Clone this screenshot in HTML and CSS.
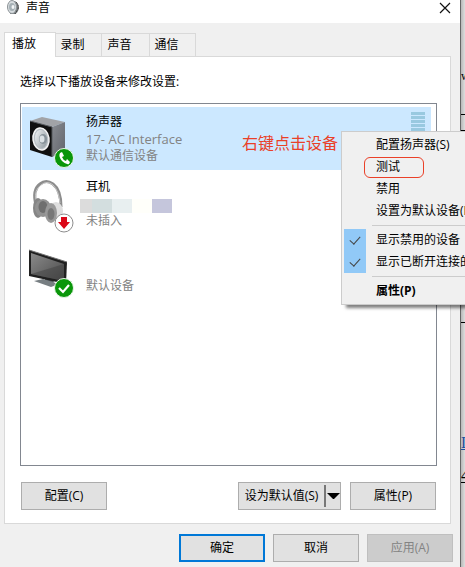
FILE: index.html
```html
<!DOCTYPE html>
<html lang="zh-CN">
<head>
  <meta charset="UTF-8" />
  <meta name="viewport" content="width=device-width, initial-scale=1.0" />
  <title>声音</title>
  <link rel="stylesheet" href="styles.css">
</head>
<body>
  <div class="desktop">
    <div class="dialog">
      <header class="titlebar">
        <svg class="title-icon" width="16" height="16" viewBox="0 0 16 16">
          <path d="M5 1 L10 1 Q14 4 14 8 Q13 13 10 14 L5 14Z" fill="#777d80"/>
          <path d="M11 2 Q14 5 13 9 L10 14" fill="none" stroke="#444" stroke-dasharray="2 1"/>
          <ellipse cx="7" cy="7" rx="4.5" ry="6.5" fill="#d8dde0" stroke="#8b9296"/>
          <ellipse cx="7" cy="7" rx="3" ry="4" fill="#a5b0b5"/>
          <ellipse cx="8" cy="7" rx="1.5" ry="2" fill="#f2f5f6"/>
        </svg>
        <span class="title">声音</span>
        <button class="close" aria-label="关闭">
          <svg width="12" height="12" viewBox="0 0 12 12"><path d="M1 1 L11 11 M11 1 L1 11" stroke="#111" stroke-width="1.2"/></svg>
        </button>
      </header>

      <nav class="tabs" role="tablist">
        <button class="tab active" role="tab" aria-selected="true">播放</button>
        <button class="tab" role="tab">录制</button>
        <button class="tab wide" role="tab">声音</button>
        <button class="tab" role="tab">通信</button>
      </nav>

      <main class="panel">
        <p class="hint">选择以下播放设备来修改设置:</p>

        <ul class="devices">
          <li class="device selected">
            <svg class="device-icon" width="48" height="54" viewBox="0 1 48 54">
              <defs>
                <linearGradient id="side" x1="0" y1="0" x2="1" y2="1">
                  <stop offset="0" stop-color="#888b91"/><stop offset="1" stop-color="#62656c"/>
                </linearGradient>
                <linearGradient id="cone" x1="0" y1="0" x2="1" y2="1">
                  <stop offset="0" stop-color="#f5f7f8"/><stop offset="1" stop-color="#8a949a"/>
                </linearGradient>
              </defs>
              <path d="M3 9 L15 5 L38 10 L25 15Z" fill="#a1a3a7"/>
              <path d="M25 15 L38 10 L38 39 L25 45Z" fill="url(#side)"/>
              <path d="M3 9 L25 15 L25 45 L3 38Z" fill="#101010"/>
              <path d="M3 9 L25 15 L25 45" fill="none" stroke="#55585c"/>
              <ellipse cx="14" cy="27" rx="8" ry="11" transform="rotate(-8 14 27)" fill="#b9c0c5" stroke="#f5f5f5" stroke-width="1.5"/>
              <ellipse cx="14" cy="27" rx="6" ry="9" transform="rotate(-8 14 27)" fill="url(#cone)"/>
              <ellipse cx="16" cy="27" rx="4" ry="5" fill="#88939a"/>
              <ellipse cx="15" cy="27" rx="2.5" ry="3.5" fill="#dce2e5"/>
              <circle cx="37" cy="46" r="9.5" fill="#0a960a" stroke="#e7f4e7"/>
              <path d="M33 41 L35 40 L37 44 L35 45 Q36 48 39 49 L40 47 L43 50 L42 52 Q39 53 35 49 Q31 44 33 41Z" fill="#fff"/>
            </svg>
            <div class="device-text">
              <span class="name">扬声器</span>
              <span class="model">17- AC Interface</span>
              <span>默认通信设备</span>
            </div>
            <div class="meter"></div>
          </li>
          <li class="device">
            <svg class="device-icon" width="48" height="54" viewBox="0 1 48 54">
              <path d="M9 28 Q5 13 13 7 Q19 2 26 7 Q34 13 34 30" fill="none" stroke="#8d8d8d" stroke-width="3"/>
              <path d="M9 23 Q7 13 14 8 Q20 3 26 8 Q32 14 33 26" fill="none" stroke="#c9c9c9"/>
              <ellipse cx="11" cy="31" rx="5" ry="10" fill="#858585"/>
              <ellipse cx="16" cy="31" rx="8" ry="9" fill="#929292"/>
              <ellipse cx="16" cy="30" rx="4.5" ry="6" fill="#6f6f6f"/>
              <ellipse cx="29" cy="34" rx="7" ry="9" fill="#dedede"/>
              <ellipse cx="24" cy="36" rx="6" ry="10" fill="#999"/>
              <ellipse cx="24" cy="37" rx="3.5" ry="6" fill="#777"/>
              <circle cx="37" cy="46" r="9" fill="#fff" stroke="#8d8d8d"/>
              <path d="M34 40 H40 V45 H43 L37 52 L31 45 H34Z" fill="#db0718"/>
            </svg>
            <div class="device-text">
              <span class="name">耳机</span>
              <span class="mosaic"><i></i><i></i><i></i><i></i><i></i></span>
              <span>未插入</span>
            </div>
          </li>
          <li class="device">
            <svg class="device-icon" width="48" height="54" viewBox="0 -1 48 54">
              <defs>
                <linearGradient id="screen" x1="0" y1="0" x2="1" y2="1">
                  <stop offset="0" stop-color="#8a8a8a"/><stop offset="1" stop-color="#4a4a4a"/>
                </linearGradient>
              </defs>
              <path d="M18 33 L27 36 L26 41 L18 38Z" fill="#555b5f"/>
              <path d="M7 37 L16 35 L32 40 L24 43Z" fill="#777e82"/>
              <path d="M2 6 L40 18 L39 40 L2 32Z" fill="#202020"/>
              <path d="M4 9 L37 20 L37 37 L4 30Z" fill="url(#screen)"/>
              <path d="M37 20 L37 37 L4 30Z" fill="#3d3d3d" opacity=".45"/>
              <path d="M2 6 L40 18" stroke="#777" stroke-width="1"/>
              <circle cx="37" cy="44" r="9.5" fill="#0a960a" stroke="#e7f4e7"/>
              <path d="M32 44 L36 48 L42 41" fill="none" stroke="#fff" stroke-width="2.2"/>
            </svg>
            <div class="device-text">
              <span class="name"></span>
              <span></span>
              <span>默认设备</span>
            </div>
          </li>
        </ul>

        <div class="panel-actions">
          <button class="btn">配置(C)</button>
          <div class="split">
            <button class="split-main">设为默认值(S)</button>
            <button class="split-arrow" aria-label="更多"></button>
          </div>
          <button class="btn">属性(P)</button>
        </div>
      </main>

      <footer class="footer">
        <button class="btn primary">确定</button>
        <button class="btn">取消</button>
        <button class="btn" disabled>应用(A)</button>
      </footer>

      <span class="note">右键点击设备</span>

      <div class="menu" role="menu">
        <button class="menu-item" role="menuitem">配置扬声器(S)</button>
        <button class="menu-item marked" role="menuitem">测试</button>
        <button class="menu-item" role="menuitem">禁用</button>
        <button class="menu-item" role="menuitem">设置为默认设备(D)</button>
        <hr>
        <label class="menu-check"><input type="checkbox" checked>显示禁用的设备</label>
        <label class="menu-check"><input type="checkbox" checked>显示已断开连接的设备</label>
        <hr>
        <button class="menu-item bold" role="menuitem">属性(P)</button>
      </div>
    </div>

    <!-- document showing behind the dialog -->
    <aside class="behind">
      <div class="cell head">w</div>
      <div class="cell thin"></div>
      <div class="cell tall"></div>
      <div class="cell links">
        <a href="#">L</a>
        <a href="#">4</a>
      </div>
    </aside>
  </div>
</body>
</html>
```

FILE: styles.css
```css
* { box-sizing: border-box; }
body {
  margin: 0;
  font-family: "Open Sans", "Noto Sans CJK SC", sans-serif;
  font-size: 12px;
  line-height: 18px;
  color: #000;
  overflow: hidden;
}
button {
  font: inherit;
  color: inherit;
  padding: 0;
  border: none;
  background: none;
}
.desktop {
  display: flex;
  min-height: 100vh;
  overflow: hidden;
}
.dialog {
  position: relative;
  flex: 1;
  min-width: 0;
  background: #f0f0f0;
  border-right: 1px solid #666;
}

/* title bar */
.titlebar {
  display: flex;
  align-items: center;
  height: 23px;
  padding: 0 9px 8px 5px;
  background: #fff;
}
.title {
  flex: 1;
  margin-left: 5px;
}
.close {
  display: flex;
}

/* tabs */
.tabs {
  display: flex;
  align-items: flex-end;
  padding: 9px 0 0 4px;
}
.tab {
  width: 46px;
  height: 23px;
  padding-right: 12px;
  border: 1px solid #d9d9d9;
  border-left: none;
  border-bottom: none;
}
.tab.wide {
  width: 48px;
}
.tab.active {
  position: relative;
  z-index: 1;
  width: 52px;
  height: 25px;
  margin-bottom: -1px;
  padding: 0 12px 2px 0;
  border-left: 1px solid #d9d9d9;
  background: #fff;
}

.panel {
  margin: 0 9px 0 4px;
  padding: 16px 13px 13px 15px;
  background: #fff;
  border: 1px solid #d9d9d9;
}
.hint {
  margin: 0 0 12px;
}
.devices {
  list-style: none;
  height: 363px;
  margin: 0;
  padding: 3px 5px 0 1px;
  border: 1px solid #828790;
}
.device {
  display: flex;
  height: 63px;
  margin-bottom: 2px;
  padding: 6px 6px 0 5px;
}
.device.selected {
  background: #cce8ff;
}
.device-icon {
  flex: none;
  margin-right: 11px;
  overflow: visible;
}
.device-text {
  flex: 1;
  color: #838383;
}
.device-text span {
  display: block;
  height: 17px;
}
.device-text .name {
  color: #000;
}
.device-text .model {
  font-size: 13px;
}
.device-text .mosaic {
  display: flex;
  height: 14px;
  margin: 4px 0 0 -6px;
}
.device-text .mosaic + span {
  margin-top: -1px;
}
.mosaic i {
  width: 20px;
  background: #d3dedf;
}
.mosaic i:nth-child(1) { width: 12px; background: #dcdcdc; }
.mosaic i:nth-child(3) { background: #e8eff0; }
.mosaic i:nth-child(4) { background: #fffffa; }
.mosaic i:nth-child(5) { background: #c5c6dc; }
.meter {
  width: 14px;
  height: 47px;
  margin-top: -1px;
  background: repeating-linear-gradient(#99c9e0 0 3px, #cce8ff 3px 4px);
}

/* buttons */
.btn {
  width: 86px;
  height: 28px;
  background: #e1e1e1;
  border: 1px solid #adadad;
}
.btn.primary {
  border: 2px solid #0078d7;
}
.btn:disabled {
  background: #ccc;
  border-color: #bfbfbf;
  color: #838383;
}
.panel-actions {
  display: flex;
  gap: 9px;
  margin-top: 16px;
  padding: 0 1px;
}
.split {
  display: flex;
  align-items: center;
  width: 103px;
  height: 28px;
  margin-left: auto;
  background: #e1e1e1;
  border: 1px solid #adadad;
}
.split-main {
  flex: 1;
  white-space: nowrap;
}
.split-arrow {
  width: 16px;
  height: 22px;
  padding-left: 1px;
  border-left: 2px solid #777;
}
.split-arrow::before {
  content: "";
  display: block;
  border: 6px solid transparent;
  border-top-color: #000;
  border-bottom: none;
}
.footer {
  display: flex;
  justify-content: flex-end;
  gap: 8px;
  padding: 10px 7px 5px 0;
}

/* red annotation next to the menu */
.note {
  position: absolute;
  top: 131px;
  left: 242px;
  font-size: 16px;
  line-height: 24px;
  color: #ea4028;
}

/* context menu */
.menu {
  position: absolute;
  top: 131px;
  left: 341px;
  z-index: 2;
  width: 180px;
  padding: 2px;
  background: #f0f0f0;
  border: 1px solid #ccc;
  box-shadow: 4px 4px 3px -1px rgba(0, 0, 0, 0.5);
}
.menu-item {
  display: block;
  position: relative;
  width: 100%;
  height: 22px;
  padding-left: 32px;
  text-align: left;
}
.menu-item.bold {
  font-weight: bold;
}
.menu-item.marked::after {
  content: "";
  position: absolute;
  top: 1px;
  left: 20px;
  width: 58px;
  height: 19px;
  border: 1px solid #ea4028;
  border-radius: 6px;
}
.menu hr {
  height: 1px;
  margin: 3px 0 3px 28px;
  border: none;
  background: #ccc;
}
.menu-check {
  display: flex;
  align-items: center;
  gap: 10px;
  height: 22px;
  white-space: nowrap;
}
.menu-check input {
  display: flex;
  justify-content: center;
  appearance: none;
  width: 22px;
  height: 22px;
  margin: 0;
  background: #91c9f7;
}
.menu-check input::after {
  content: "";
  width: 5px;
  height: 9px;
  margin-top: 5px;
  border: solid #444;
  border-width: 0 1px 1px 0;
  transform: rotate(42deg);
}

.behind {
  width: 4px;
  overflow: hidden;
  background: linear-gradient(90deg, #b8b8b8, #dedede);
  font-family: "Liberation Serif", serif;
}
.cell {
  border-bottom: 1px solid #000;
}
.cell.head {
  height: 115px;
  padding-top: 67px;
}
.cell.thin {
  height: 16px;
}
.cell.tall {
  height: 192px;
}
.cell.links {
  padding-top: 111px;
  border: none;
}
.cell.links a {
  display: block;
  height: 33px;
  font-size: 16px;
  color: #000;
}
.cell.links a:first-child {
  color: #1f4e9e;
}
```
